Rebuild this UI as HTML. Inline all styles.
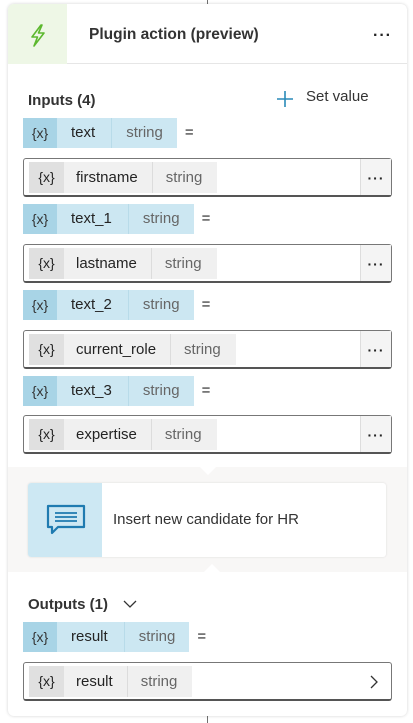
<!DOCTYPE html>
<html><head><meta charset="utf-8"><style>
*{box-sizing:border-box;margin:0;padding:0}
body{width:413px;height:723px;background:#fff;font-family:"Liberation Sans",sans-serif;position:relative;overflow:hidden;color:#242424}
.line{position:absolute;left:207px;width:1px;background:#707070}
.card{position:absolute;left:8px;top:4px;width:399px;height:712px;background:#fff;border-radius:6px;box-shadow:0 0 3px rgba(0,0,0,.18)}
.hdr{position:absolute;left:0;top:0;width:399px;height:60px;border-bottom:1px solid #e6e6e6}
.hicon{position:absolute;left:0;top:0;width:59px;height:60px;background:#eef7e6;border-top-left-radius:6px}
.title{position:absolute;left:81px;top:22px;font-size:15.5px;font-weight:bold;color:#333}
.dots{position:absolute;font-weight:bold;letter-spacing:1px}
.lbl{position:absolute;font-size:15px;font-weight:bold;color:#333}
.chip{position:absolute;left:23px;height:30px;display:flex;font-size:15px;line-height:30px}
.chip .x{width:34px;background:#a8d4e6;text-align:center;font-size:14px;color:#333}
.chip .n{background:#cce7f2;padding:0 16px 0 14px;border-right:1px solid #b8dbe9}
.chip .t{background:#cce7f2;padding:0 14px 0 14px;color:#666}
.chip .eq{padding-left:8px}
.box{position:absolute;left:23px;width:369px;height:39px;border:1px solid #777;border-bottom:2px solid #555;border-radius:3px;background:#fff}
.ic{position:absolute;left:5px;top:3px;height:31px;display:flex;font-size:15px;line-height:31px;background:#f0f0f0}
.ic .x{width:35px;background:#e0e0e0;text-align:center;font-size:14px}
.ic .n{padding:0 14px 0 12px;border-right:1px solid #dcdcdc}
.ic .t{padding:0 15px 0 13px;color:#666}
.more{position:absolute;right:0;top:0;width:31px;height:36px;background:#f4f4f4;border-left:1px solid #ddd;text-align:center;line-height:38px;font-weight:bold;font-size:14px;letter-spacing:1px}
.gray{position:absolute;left:0;top:463px;width:399px;height:105px;background:#f8f7f6}
.msg{position:absolute;left:20px;top:16px;width:358px;height:74px;background:#fff;border-radius:3px;box-shadow:0 0 2px rgba(0,0,0,.12)}
.mi{position:absolute;left:0;top:0;width:74px;height:74px;background:#cde8f3;border-radius:3px 0 0 3px}
.mt{position:absolute;left:85px;top:28px;font-size:15px;color:#333}
</style></head><body>
<div class="line" style="top:0;height:4px"></div>
<div class="line" style="top:716px;height:7px"></div>
<div class="card">
 <div class="hdr">
  <div class="hicon"><svg width="59" height="60" viewBox="0 0 59 60"><path d="M33 21 L24 33 L29.5 33 L26 42 L36 29 L30.5 29 L34 21 Z" fill="none" stroke="#5cb82e" stroke-width="1.6" stroke-linejoin="round"/></svg></div>
  <div class="title">Plugin action (preview)</div>
  <div class="dots" style="left:365px;top:23px">···</div>
 </div>
 <div class="lbl" style="left:20px;top:88px">Inputs (4)</div>
 <svg style="position:absolute;left:267px;top:85px" width="20" height="20"><path d="M10 2V18M2 10H18" stroke="#2a8ab8" stroke-width="1.6"/></svg>
 <div style="position:absolute;left:298px;top:84px;font-size:15px;color:#333">Set value</div>

 <div class="chip" style="top:114px;left:15px"><span class="x">{x}</span><span class="n">text</span><span class="t">string</span><span class="eq">=</span></div>
 <div class="box" style="top:154px;left:15px"><div class="ic"><span class="x">{x}</span><span class="n">firstname</span><span class="t">string</span></div><div class="more">···</div></div>

 <div class="chip" style="top:200px;left:15px"><span class="x">{x}</span><span class="n">text_1</span><span class="t">string</span><span class="eq">=</span></div>
 <div class="box" style="top:240px;left:15px"><div class="ic"><span class="x">{x}</span><span class="n">lastname</span><span class="t">string</span></div><div class="more">···</div></div>

 <div class="chip" style="top:286px;left:15px"><span class="x">{x}</span><span class="n">text_2</span><span class="t">string</span><span class="eq">=</span></div>
 <div class="box" style="top:326px;left:15px"><div class="ic"><span class="x">{x}</span><span class="n">current_role</span><span class="t">string</span></div><div class="more">···</div></div>

 <div class="chip" style="top:372px;left:15px"><span class="x">{x}</span><span class="n">text_3</span><span class="t">string</span><span class="eq">=</span></div>
 <div class="box" style="top:411px;left:15px"><div class="ic"><span class="x">{x}</span><span class="n">expertise</span><span class="t">string</span></div><div class="more">···</div></div>

 <div class="gray">
  <svg style="position:absolute;left:192px;top:0" width="16" height="8"><path d="M0 0L8 8L16 0Z" fill="#fff"/></svg>
  <div class="msg"><div class="mi"><svg width="74" height="74" viewBox="0 0 74 74"><path d="M20 23H56V44H30L24 50V44H20Z" fill="none" stroke="#1f7bb0" stroke-width="2.2" stroke-linejoin="round"/><path d="M27 30H49M27 34H49M27 38H49" stroke="#1f7bb0" stroke-width="1.8"/></svg></div><div class="mt">Insert new candidate for HR</div></div>
  <svg style="position:absolute;left:196px;top:97px" width="16" height="8"><path d="M0 8L8 0L16 8Z" fill="#fff"/></svg>
 </div>

 <div class="lbl" style="left:20px;top:592px">Outputs (1)</div>
 <svg style="position:absolute;left:114px;top:594px" width="16" height="12"><path d="M2 3L8 9L14 3" fill="none" stroke="#333" stroke-width="1.3"/></svg>
 <div class="chip" style="top:618px;left:15px"><span class="x">{x}</span><span class="n">result</span><span class="t">string</span><span class="eq">=</span></div>
 <div class="box" style="top:658px;left:15px;border-bottom:2px solid #555"><div class="ic"><span class="x">{x}</span><span class="n">result</span><span class="t">string</span></div>
  <svg style="position:absolute;right:12px;top:11px" width="10" height="16"><path d="M2 2L8 8L2 14" fill="none" stroke="#333" stroke-width="1.3"/></svg></div>
</div>
</body></html>
